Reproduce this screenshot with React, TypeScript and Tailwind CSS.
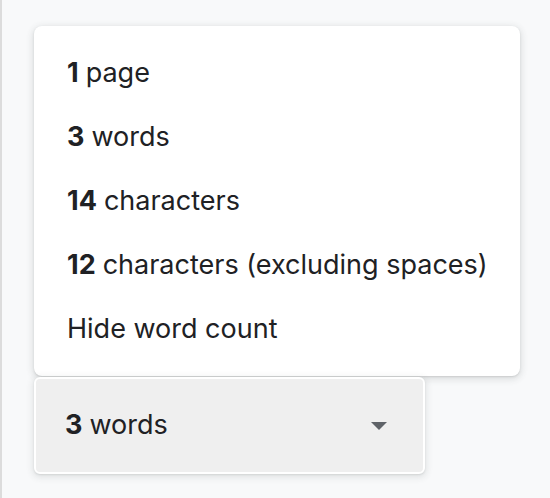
import React from "react";

const items: [string | null, string][] = [
  ["1", "page"],
  ["3", "words"],
  ["14", "characters"],
  ["12", "characters (excluding spaces)"],
  [null, "Hide word count"],
];

export default function App() {
  return (
    <div
      className="w-[550px] h-[498px] bg-[#f8f9fa] border-l-2 border-[#dcdcdc] pl-[32px] pt-[26px] text-[#202124]"
      style={{ fontFamily: "Inter, Roboto, 'Liberation Sans', sans-serif" }}
    >
      <div className="w-[486px] bg-white rounded-[8px] shadow-[0_2px_6px_2px_rgba(60,64,67,0.12),0_1px_2px_rgba(60,64,67,0.15)] py-[15px]">
        {items.map(([num, label], i) => (
          <div key={i} className="h-[64px] flex items-center pl-[33px] text-[27px]">
            {num && <span className="font-bold mr-[7px]">{num}</span>}
            <span>{label}</span>
          </div>
        ))}
      </div>
      <div className="mt-[1px] w-[391px] h-[97px] bg-[#efefef] border-2 border-white rounded-[6px] shadow-[0_2px_6px_2px_rgba(60,64,67,0.1),0_1px_2px_rgba(60,64,67,0.12)] flex items-center justify-between pl-[29px] pr-[36px] text-[27px]">
        <div>
          <span className="font-bold mr-[7px]">3</span>
          <span>words</span>
        </div>
        <svg width="16" height="8" viewBox="0 0 16 8">
          <path d="M0 0 L16 0 L8 8 Z" fill="#5f6368" />
        </svg>
      </div>
    </div>
  );
}
